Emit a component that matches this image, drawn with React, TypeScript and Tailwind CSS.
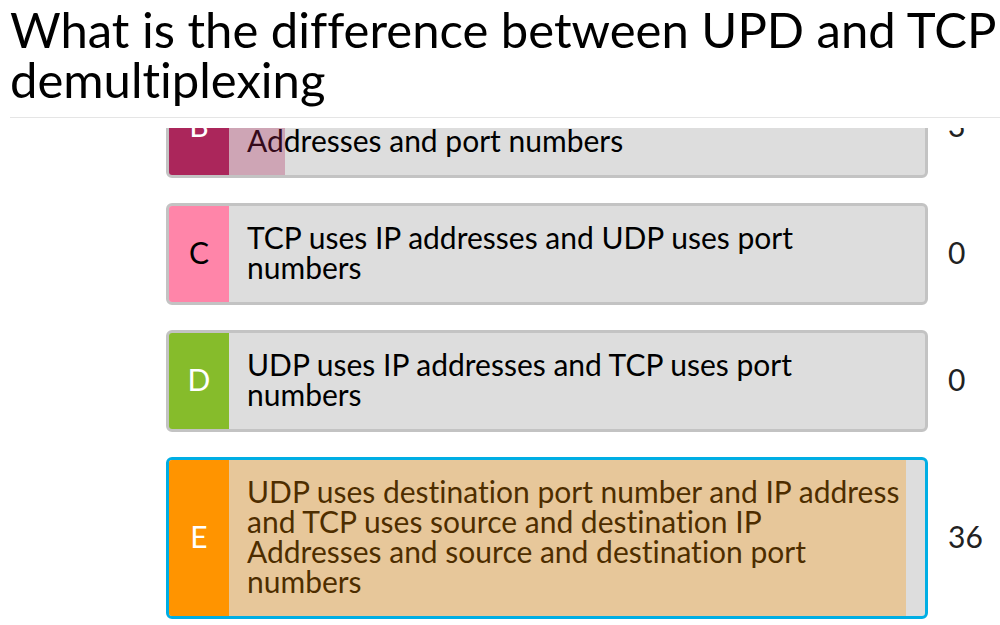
import React from "react";

type Option = {
  letter: string;
  lines: string[];
  votes: number;
  share: number;
  badge: string;
  fill: string;
  text: string;
  frame: string;
};

const options: Option[] = [
  {
    letter: "B",
    lines: ["Addresses and port numbers"],
    votes: 3,
    share: 8,
    badge: "bg-[#ab265b] text-white",
    fill: "bg-[#ab265b]",
    text: "pt-[46px]",
    frame: "border-[#c3c3c3]",
  },
  {
    letter: "C",
    lines: ["TCP uses IP addresses and UDP uses port", "numbers"],
    votes: 0,
    share: 0,
    badge: "bg-[#ff85a9] text-black",
    fill: "bg-[#ff85a9]",
    text: "pt-4",
    frame: "border-[#c3c3c3]",
  },
  {
    letter: "D",
    lines: ["UDP uses IP addresses and TCP uses port", "numbers"],
    votes: 0,
    share: 0,
    badge: "bg-[#86bc2b] text-white",
    fill: "bg-[#86bc2b]",
    text: "pt-4",
    frame: "border-[#c3c3c3]",
  },
  {
    letter: "E",
    lines: [
      "UDP uses destination port number and IP address",
      "and TCP uses source and destination IP",
      "Addresses and source and destination port",
      "numbers",
    ],
    votes: 36,
    share: 97.3,
    badge: "bg-[#ff9400] text-white",
    fill: "bg-[#ff9400]",
    text: "pt-4",
    frame: "border-[#00aee4]",
  },
];

function OptionRow({ option }: { option: Option }) {
  return (
    <li className="flex items-center gap-5">
      <div
        className={`flex min-w-0 flex-1 overflow-hidden rounded-md border-3 bg-[#ddd] ${option.frame}`}
      >
        <div className={`flex w-[60px] shrink-0 items-center justify-center pb-1 ${option.badge}`}>
          {option.letter}
        </div>
        <div className="relative min-w-0 flex-1">
          <p className={`pb-5 pl-[18px] whitespace-nowrap ${option.text}`}>
            {option.lines.map((line) => (
              <span key={line} className="block">
                {line}
              </span>
            ))}
          </p>
          <div
            className={`absolute inset-y-0 left-0 opacity-30 ${option.fill}`}
            style={{ width: `${option.share}%` }}
          />
        </div>
      </div>
      <span className="w-[52px] shrink-0 pb-1 text-[#222]">{option.votes}</span>
    </li>
  );
}

export default function App() {
  return (
    <main className="overflow-hidden bg-white font-[Lato,sans-serif] text-black [font-variant-ligatures:none]">
      <header className="ml-[10px] border-b border-[#e5e5e5] pt-1 pb-[13px]">
        <h1 className="text-[49px] leading-[50px] whitespace-nowrap">
          What is the difference between UPD and TCP
          <br />
          demultiplexing
        </h1>
      </header>
      <section className="mt-[10px] overflow-hidden pb-1.5">
        <ul className="-mt-[52px] flex flex-col gap-[25px] pl-[166px] text-[30px] leading-[30px]">
          {options.map((option) => (
            <OptionRow key={option.letter} option={option} />
          ))}
        </ul>
      </section>
    </main>
  );
}
